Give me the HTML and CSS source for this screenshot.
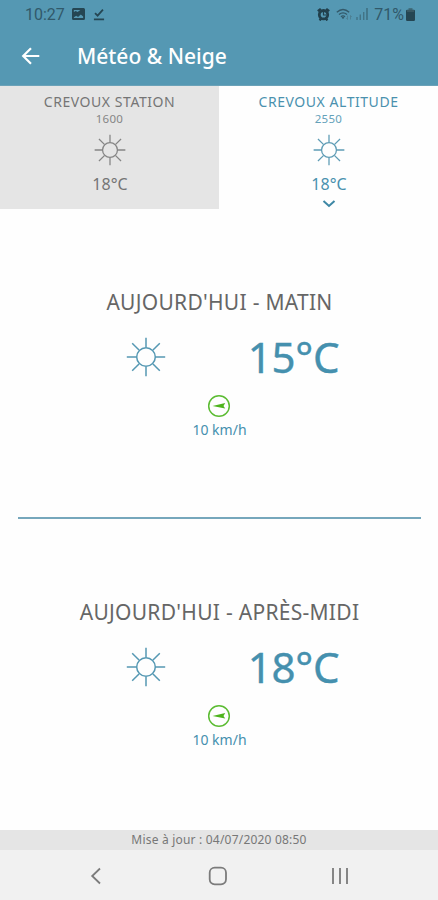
FILE: index.html
```html
<!DOCTYPE html>
<html lang="fr">
<head>
  <meta charset="UTF-8">
  <meta name="viewport" content="width=device-width, initial-scale=1.0">
  <title>Météo &amp; Neige</title>
  <link rel="stylesheet" href="styles.css">
</head>
<body>
  <svg width="0" height="0" class="defs">
    <symbol id="sun" viewBox="0 0 40 40">
      <circle cx="20" cy="20" r="9.3"/>
      <path d="M20 .8v9.500M20 29.700v9.500M.8 20h9.500M29.700 20h9.500M6.200 6.200l6.800 6.800M27 27l6.800 6.800M6.200 33.800l6.800-6.800M27 13l6.800-6.800"/>
    </symbol>
    <symbol id="wind" viewBox="0 0 24 24">
      <circle cx="12" cy="12" r="10.300" fill="none" stroke="#5cbc33" stroke-width="1.500"/>
      <path d="M5.500 12.100l12.700-3-1.700 2.800 1.700 2.500z" fill="#4db41c"/>
    </symbol>
  </svg>

  <header>
    <div class="status">
      <span class="clock">10:27</span>
      <svg class="status-picture" width="13" height="12" viewBox="0 0 14 12" preserveAspectRatio="none">
        <path fill-rule="evenodd" d="M1.500 0h11q1.500 0 1.500 1.500v9q0 1.500-1.500 1.500h-11q-1.500 0-1.500-1.500v-9q0-1.500 1.500-1.500zM2 10h10v-1.500l-2.500-2-3 2.500-2-1.200-2.500 1.500zM2 2v2l2-1 2 1 3-2z"/>
      </svg>
      <svg class="status-check" width="12" height="13" viewBox="0 0 13 13">
        <path d="M2.200 5l2.800 2.800 5.800-6.500M1 11.700h11" fill="none" stroke="#254653" stroke-width="1.900"/>
      </svg>
      <svg class="status-alarm" width="13" height="13" viewBox="0 0 13 13">
        <path d="M.8 3.200l3-2.400M12.200 3.200l-3-2.400M2.600 12.500l1.500-2M10.400 12.500l-1.500-2" stroke="#213f4b" stroke-width="2.200"/>
        <circle cx="6.500" cy="6.700" r="4.200" fill="none" stroke="#213f4b" stroke-width="2.800"/>
        <path d="M6.500 4v3h2.500" fill="none" stroke="#213f4b" stroke-width="1.200"/>
      </svg>
      <svg class="status-wifi" width="17" height="13" viewBox="0 0 17 13">
        <path d="M.8 4.200q6.200-5.400 12.400 0M3 6.500q4-3.300 8 0M5 8.700q2-1.600 4 0" fill="none" stroke="#33596a" stroke-width="1.400"/>
        <path d="M5.600 9.300h2.800l-1.400 1.700z"/>
        <path d="M11.500 7.500v4M11.500 11.500l-1.200-1.500M14.500 11.500v-4l1.200 1.500" fill="none" stroke="#4b7b8d" stroke-width=".8"/>
      </svg>
      <svg class="status-signal" width="12" height="12" viewBox="0 0 12 12">
        <path d="M1 9v3M4.300 6.500v5.500M7.700 4v8" stroke="#427386" stroke-width="1.400"/>
        <path d="M11 0v12" stroke="#3a6677" stroke-width="1.300"/>
      </svg>
      <span class="battery">71%</span>
      <svg class="status-battery" width="9" height="13" viewBox="0 0 9 13">
        <path d="M2.500 0h4v2h-4z" fill="#42707f"/>
        <rect y="1.700" width="9" height="11.300" rx="1.200"/>
        <path d="M1 3h7" stroke="#41606b" stroke-width="1.400"/>
      </svg>
    </div>
    <div class="toolbar">
      <svg width="19" height="18" viewBox="0 0 19 18">
        <path d="M18.300 9h-16M10 1.200l-7.800 7.800 7.800 7.800" fill="none" stroke="#fff" stroke-width="2.200"/>
      </svg>
      <h1>Météo &amp; Neige</h1>
    </div>
  </header>

  <nav class="tabs">
    <div class="tab">
      <div class="tab-name">CREVOUX STATION</div>
      <div class="tab-height">1600</div>
      <svg class="tab-sun"><use href="#sun"/></svg>
      <div class="tab-temp">18°C</div>
    </div>
    <div class="tab active">
      <div class="tab-name">CREVOUX ALTITUDE</div>
      <div class="tab-height">2550</div>
      <svg class="tab-sun"><use href="#sun"/></svg>
      <div class="tab-temp">18°C</div>
      <svg class="chevron" width="14" height="8" viewBox="0 0 14 8">
        <path d="M1.500 1l5.500 5 5.500-5" fill="none" stroke="#3d87a5" stroke-width="2"/>
      </svg>
    </div>
  </nav>

  <main>
    <section class="period">
      <h2>AUJOURD'HUI - MATIN</h2>
      <div class="weather">
        <svg class="weather-sun"><use href="#sun"/></svg>
        <div class="temp">15°C</div>
      </div>
      <svg class="wind"><use href="#wind"/></svg>
      <div class="speed">10 km/h</div>
    </section>
    <section class="period">
      <h2>AUJOURD'HUI - APRÈS-MIDI</h2>
      <div class="weather">
        <svg class="weather-sun"><use href="#sun"/></svg>
        <div class="temp">18°C</div>
      </div>
      <svg class="wind"><use href="#wind"/></svg>
      <div class="speed">10 km/h</div>
    </section>
  </main>

  <footer>
    <div class="update">Mise à jour : 04/07/2020 08:50</div>
    <div class="system-nav">
      <svg width="12" height="18" viewBox="0 0 12 18">
        <path d="M10 1.500l-7.800 7.500 7.800 7.500"/>
      </svg>
      <svg width="20" height="20" viewBox="0 0 20 20">
        <rect x="2.700" y="1.700" width="16.300" height="16.600" rx="5"/>
      </svg>
      <svg width="18" height="18" viewBox="0 0 18 18">
        <path d="M2 1v16M9 1v16M16 1v16"/>
      </svg>
    </div>
  </footer>
</body>
</html>
```
FILE: styles.css
```css
* {
  box-sizing: border-box;
}
body {
  margin: 0;
  height: 900px;
  display: flex;
  flex-direction: column;
  background: #fefefe;
  font-family: "Noto Sans", sans-serif;
  overflow: hidden;
}
svg {
  display: block;
  flex: none;
}
.defs {
  position: absolute;
}
h1, h2 {
  margin: 0;
  font-weight: 400;
}
header {
  height: 86px;
  background: #5598b3;
  border-bottom: 1px solid #6ba2b8;
}
.status {
  display: flex;
  align-items: center;
  height: 28px;
  padding: 0 23px 0 25px;
  font-family: Roboto, sans-serif;
  font-size: 16px;
  color: #31596a;
  fill: #254653;
}
.clock {
  width: 40px;
}
.status-picture {
  margin-left: 7px;
}
.status-check {
  margin-left: 8px;
}
.status-alarm {
  margin-left: auto;
}
.status-wifi {
  margin-left: 6px;
}
.status-signal {
  margin-left: 3px;
}
.battery {
  margin-left: 6px;
}
.status-battery {
  margin-left: 2px;
}
.toolbar {
  display: flex;
  align-items: center;
  height: 56px;
  padding-left: 21px;
  gap: 37px;
}
h1 {
  font-size: 21px;
  font-weight: 500;
  color: #fff;
}
.tabs {
  display: flex;
  height: 123px;
}
.tab {
  flex: 1;
  display: flex;
  flex-direction: column;
  align-items: center;
  padding-top: 6px;
  background: #e5e5e5;
  color: #757575;
  stroke: #858585;
}
.tab.active {
  background: #fefefe;
  color: #4a91ae;
  stroke: #5e9cb5;
}
.tab-name {
  font-size: 14px;
  line-height: 19px;
  letter-spacing: 0.55px;
}
.tab-height {
  font-size: 11.5px;
  line-height: 15px;
  letter-spacing: 0.3px;
  opacity: 0.85;
}
.tab-sun {
  width: 32px;
  height: 32px;
  margin-top: 8px;
  fill: none;
  stroke-width: 1.6;
}
.tab-temp {
  margin-top: 7px;
  font-size: 16px;
  line-height: 22px;
  padding-left: 1px;
}
.chevron {
  margin-top: 5px;
}
main {
  flex: 1;
  padding: 0 17px 0 18px;
}
.period {
  display: flex;
  flex-direction: column;
  align-items: center;
  height: 310px;
  padding-top: 78px;
}
.period:first-child {
  border-bottom: 2px solid #76a7bc;
}
h2 {
  font-size: 21px;
  line-height: 30px;
  letter-spacing: 0.28px;
  color: #666;
}
.weather {
  display: flex;
  align-items: center;
  gap: 82px;
  height: 60px;
  margin-top: 10px;
  padding-left: 26px;
}
.weather-sun {
  width: 40px;
  height: 40px;
  fill: none;
  stroke: #5598b3;
  stroke-width: 1.5;
}
.temp {
  font-size: 42px;
  line-height: 60px;
  letter-spacing: -0.3px;
  color: #4590ae;
  -webkit-text-stroke: 0.4px #4590ae;
}
.wind {
  width: 24px;
  height: 24px;
  margin: 7px 1px 0 0;
}
.speed {
  font-size: 14px;
  line-height: 20px;
  margin-top: 2px;
  color: #4590ae;
}
.update {
  height: 20px;
  background: #e5e5e5;
  font-size: 12px;
  line-height: 20px;
  letter-spacing: 0.2px;
  text-align: center;
  color: #777;
}
.system-nav {
  display: flex;
  align-items: center;
  justify-content: space-between;
  height: 50px;
  padding: 2px 89px 0 90px;
  background: #f1f1f1;
  fill: none;
  stroke: #7b7b7b;
  stroke-width: 1.8;
}
```
